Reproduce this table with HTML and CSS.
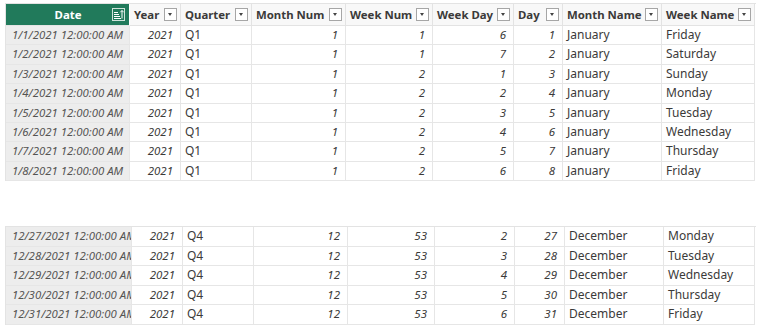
FILE: index.html
```html
<!DOCTYPE html>
<html>
<head>
<meta charset="utf-8">
<link rel="stylesheet" href="styles.css">
</head>
<body>
<div class="page">
  <div class="grid top">
    <div class="hd date-hd"><span class="hd-label">Date</span>
      <svg class="sort" width="13" height="13" viewBox="0 0 13 13"><rect x="0.5" y="0.5" width="12" height="12" fill="none" stroke="#cfe3da"/><path d="M2 4.5h4M2 6.5h5M2 8.5h6M2 10.5h7" stroke="#ffffff" stroke-width="1"/><path d="M10 10.5V2.5M8.3 4.3L10 2.5l1.7 1.8" stroke="#ffffff" stroke-width="1" fill="none"/></svg>
    </div>
    <div class="hd"><span>Year</span><i class="flt"></i></div>
    <div class="hd"><span>Quarter</span><i class="flt"></i></div>
    <div class="hd"><span>Month Num</span><i class="flt"></i></div>
    <div class="hd"><span>Week Num</span><i class="flt"></i></div>
    <div class="hd"><span>Week Day</span><i class="flt"></i></div>
    <div class="hd"><span>Day</span><i class="flt"></i></div>
    <div class="hd"><span>Month Name</span><i class="flt"></i></div>
    <div class="hd"><span>Week Name</span><i class="flt"></i></div>

    <div class="c d">1/1/2021 12:00:00 AM</div><div class="c n">2021</div><div class="c t">Q1</div><div class="c n">1</div><div class="c n">1</div><div class="c n">6</div><div class="c n">1</div><div class="c t">January</div><div class="c t">Friday</div>
    <div class="c d">1/2/2021 12:00:00 AM</div><div class="c n">2021</div><div class="c t">Q1</div><div class="c n">1</div><div class="c n">1</div><div class="c n">7</div><div class="c n">2</div><div class="c t">January</div><div class="c t">Saturday</div>
    <div class="c d">1/3/2021 12:00:00 AM</div><div class="c n">2021</div><div class="c t">Q1</div><div class="c n">1</div><div class="c n">2</div><div class="c n">1</div><div class="c n">3</div><div class="c t">January</div><div class="c t">Sunday</div>
    <div class="c d">1/4/2021 12:00:00 AM</div><div class="c n">2021</div><div class="c t">Q1</div><div class="c n">1</div><div class="c n">2</div><div class="c n">2</div><div class="c n">4</div><div class="c t">January</div><div class="c t">Monday</div>
    <div class="c d">1/5/2021 12:00:00 AM</div><div class="c n">2021</div><div class="c t">Q1</div><div class="c n">1</div><div class="c n">2</div><div class="c n">3</div><div class="c n">5</div><div class="c t">January</div><div class="c t">Tuesday</div>
    <div class="c d">1/6/2021 12:00:00 AM</div><div class="c n">2021</div><div class="c t">Q1</div><div class="c n">1</div><div class="c n">2</div><div class="c n">4</div><div class="c n">6</div><div class="c t">January</div><div class="c t">Wednesday</div>
    <div class="c d">1/7/2021 12:00:00 AM</div><div class="c n">2021</div><div class="c t">Q1</div><div class="c n">1</div><div class="c n">2</div><div class="c n">5</div><div class="c n">7</div><div class="c t">January</div><div class="c t">Thursday</div>
    <div class="c d">1/8/2021 12:00:00 AM</div><div class="c n">2021</div><div class="c t">Q1</div><div class="c n">1</div><div class="c n">2</div><div class="c n">6</div><div class="c n">8</div><div class="c t">January</div><div class="c t">Friday</div>
  </div>

  <div class="grid bottom">
    <div class="c d">12/27/2021 12:00:00 AM</div><div class="c n">2021</div><div class="c t">Q4</div><div class="c n">12</div><div class="c n">53</div><div class="c n">2</div><div class="c n">27</div><div class="c t">December</div><div class="c t">Monday</div>
    <div class="c d">12/28/2021 12:00:00 AM</div><div class="c n">2021</div><div class="c t">Q4</div><div class="c n">12</div><div class="c n">53</div><div class="c n">3</div><div class="c n">28</div><div class="c t">December</div><div class="c t">Tuesday</div>
    <div class="c d">12/29/2021 12:00:00 AM</div><div class="c n">2021</div><div class="c t">Q4</div><div class="c n">12</div><div class="c n">53</div><div class="c n">4</div><div class="c n">29</div><div class="c t">December</div><div class="c t">Wednesday</div>
    <div class="c d">12/30/2021 12:00:00 AM</div><div class="c n">2021</div><div class="c t">Q4</div><div class="c n">12</div><div class="c n">53</div><div class="c n">5</div><div class="c n">30</div><div class="c t">December</div><div class="c t">Thursday</div>
    <div class="c d">12/31/2021 12:00:00 AM</div><div class="c n">2021</div><div class="c t">Q4</div><div class="c n">12</div><div class="c n">53</div><div class="c n">6</div><div class="c n">31</div><div class="c t">December</div><div class="c t">Friday</div>
  </div>
</div>
</body>
</html>
```
FILE: styles.css
```css
html, body {
  margin: 0;
  padding: 0;
  background: #ffffff;
}
.page {
  padding: 3px 12px 0 5px;
  display: flex;
  flex-direction: column;
  gap: 45px;
  font-family: "Noto Sans", "Open Sans", sans-serif;
  font-size: 12px;
  color: #3b3a39;
}
.grid {
  display: grid;
  width: 750px;
  border-top: 1px solid #e3e3e3;
  border-left: 1px solid #e3e3e3;
}
.top {
  grid-template-columns: 124px 51px 71px 94px 87px 81px 49px 99px 93px;
  grid-template-rows: 22px repeat(8, 19.4px);
}
.bottom {
  grid-template-columns: 126px 51px 71px 94px 87px 80px 50px 99px 91px;
  grid-template-rows: repeat(5, 19.5px);
}
.hd {
  display: flex;
  align-items: center;
  justify-content: space-between;
  padding: 0 3px 0 4px;
  background: #f8f8f8;
  border-right: 1px solid #e3e3e3;
  border-bottom: 1px solid #e3e3e3;
  font-weight: 700;
  font-size: 11.4px;
  color: #3b3a39;
  white-space: nowrap;
  overflow: hidden;
}
.date-hd {
  background: #217a5b;
  color: #ffffff;
  justify-content: center;
  position: relative;
  border-right: 1px solid #ffffff;
}
.date-hd .sort {
  position: absolute;
  right: 4px;
  top: 4px;
}
.flt {
  width: 11px;
  height: 11px;
  border: 1px solid #a6a6a6;
  background: #ffffff;
  position: relative;
  flex: none;
}
.flt::after {
  content: "";
  position: absolute;
  left: 3px;
  top: 4px;
  border-left: 2.5px solid transparent;
  border-right: 2.5px solid transparent;
  border-top: 3px solid #444444;
}
.c {
  border-right: 1px solid #e6e6e6;
  border-bottom: 1px solid #e6e6e6;
  white-space: nowrap;
  overflow: hidden;
  line-height: 18.4px;
  padding: 0 6px 0 4px;
}
.d {
  background: #ededed;
  font-style: italic;
  font-size: 11.4px;
  text-align: right;
  color: #555453;
  padding-left: 6px;
}
.n {
  font-style: italic;
  font-size: 11.5px;
  text-align: right;
  padding-right: 7px;
}
.t {
  text-align: left;
}
```
